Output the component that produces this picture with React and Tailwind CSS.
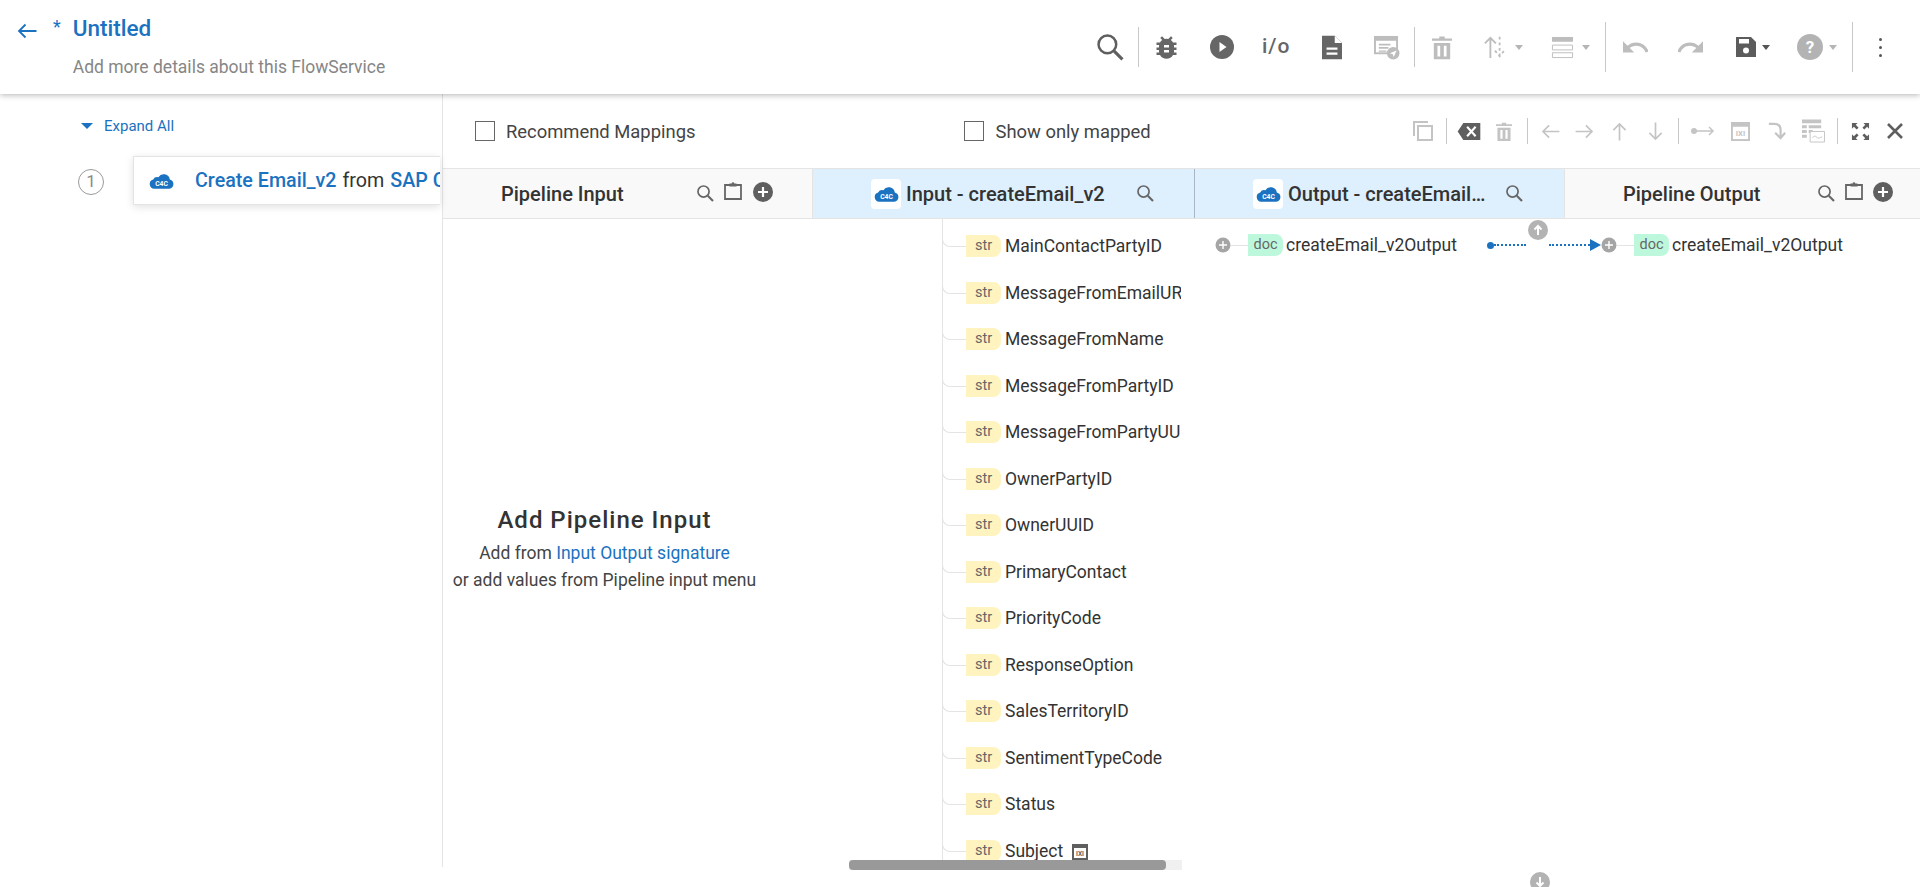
import React from 'react';

const rows = [
  'MainContactPartyID',
  'MessageFromEmailURI',
  'MessageFromName',
  'MessageFromPartyID',
  'MessageFromPartyUUID',
  'OwnerPartyID',
  'OwnerUUID',
  'PrimaryContact',
  'PriorityCode',
  'ResponseOption',
  'SalesTerritoryID',
  'SentimentTypeCode',
  'Status',
  'Subject',
];

const undoPath = 'M12.500 8c-2.650 0-5.050.990-6.900 2.600L2 7v9h9l-3.620-3.620c1.390-1.160 3.160-1.880 5.120-1.880 3.540 0 6.550 2.310 7.600 5.500l2.370-.780C21.080 11.030 17.150 8 12.500 8z';

const CloudIcon = ({ className }) => (
  <svg viewBox="0 0 24 16" className={className}>
    <path fill="#1b72c0" d="M5 16a4.600 4.600 0 0 1-1-9 4.500 4.500 0 0 1 5-2.200A6 6 0 0 1 20 7a4.600 4.600 0 0 1-.5 9z" />
    <text x="12" y="13" textAnchor="middle" fontSize="6.500" fontWeight="700" fill="#fff" fontFamily="Roboto, sans-serif">C4C</text>
  </svg>
);

const Divider = ({ className }) => <div className={`w-px shrink-0 bg-[#c8c8c8] ${className}`} />;

const Caret = ({ className, dark }) => (
  <span className={`w-0 h-0 shrink-0 border-x-[4.500px] border-x-transparent border-t-[5px] ${dark ? 'border-t-[#555]' : 'border-t-[#b5b5b5]'} ${className}`} />
);

const SearchIcon = ({ className, color = '#666666', width = 2.400 }) => (
  <svg viewBox="0 0 26 26" className={className}>
    <circle cx="10" cy="10" r="8.500" fill="none" stroke={color} strokeWidth={width} />
    <path d="m16.500 16.500 8 8" stroke={color} strokeWidth={width + 0.600} fill="none" />
  </svg>
);

const ArrowIcon = ({ className, color = '#c4c4c4' }) => (
  <svg viewBox="0 0 20 16" className={className}>
    <path d="M19.500 8H2M8.500 1.500 2 8l6.500 6.500" stroke={color} strokeWidth="1.800" fill="none" />
  </svg>
);

const Clipboard = () => (
  <svg viewBox="0 0 18 18" className="w-[18px] h-[18px]">
    <path d="M1 3h16v14H1z" fill="none" stroke="#666" strokeWidth="1.800" />
    <path d="M5.500 1.500h2.200a1.300 1.300 0 0 1 2.600 0h2.200v3h-7z" fill="#666" />
  </svg>
);

const PlusCircle = () => (
  <svg viewBox="0 0 20 20" className="w-5 h-5">
    <circle cx="10" cy="10" r="10" fill="#5f5f5f" />
    <path d="M10 5v10M5 10h10" stroke="#fff" strokeWidth="2.200" />
  </svg>
);

const SmallPlus = () => (
  <svg viewBox="0 0 16 16" className="w-4 h-4 shrink-0">
    <circle cx="8" cy="8" r="7.500" fill="#a5a5a5" />
    <path d="M8 4v8M4 8h8" stroke="#fff" strokeWidth="1.400" />
  </svg>
);

const ArrowBadge = ({ up }) => (
  <svg viewBox="0 0 20 20" className="w-5 h-5">
    <circle cx="10" cy="10" r="10" fill="#b3b3b3" />
    <path d={up ? 'M10 15V6M6.500 9.500 10 6l3.500 3.500' : 'M10 5v9M6.500 10.500 10 14l3.500-3.500'} stroke="#fff" strokeWidth="2" fill="none" />
  </svg>
);

const Chip = ({ kind }) => (
  <span
    className={`h-[22px] w-[35px] flex items-center justify-center text-[14.500px] rounded-r-lg shrink-0 text-[#666] ${
      kind === 'doc' ? 'bg-[#bdf8dd]' : 'bg-[#fff4bf]'
    }`}
  >
    {kind}
  </span>
);

const TopBar = () => (
  <header className="h-[94px] bg-white shadow-[0_1px_6px_rgba(0,0,0,0.3)] flex items-center justify-between relative z-20 shrink-0">
    <div className="flex items-start pl-[17px] pb-[1px]">
      <ArrowIcon className="w-5 h-4 mt-[9px]" color="#1b72c0" />
      <span className="ml-[16px] -mt-[1px] text-[#1b72c0] text-[18px]">*</span>
      <div className="ml-[12px]">
        <div className="text-[22.500px] leading-[28px] font-medium text-[#1b72c0]">Untitled</div>
        <div className="text-[17.500px] leading-[24px] mt-[13px] text-[#868686]">Add more details about this FlowService</div>
      </div>
    </div>
    <div className="flex items-center pr-[38px] h-[50px]">
      <SearchIcon className="w-[27px] h-[27px]" color="#5f5f5f" />
      <Divider className="ml-[14px] h-10" />
      <svg viewBox="3 2 18 20" className="ml-[16px] w-[23px] h-[25px]">
        <path fill="#666" d="M20 8h-2.800a6 6 0 0 0-1.800-1.950L17 4.400 15.600 3l-2.170 2.170a6 6 0 0 0-2.860 0L8.400 3 7 4.400l1.620 1.650A6 6 0 0 0 6.800 8H4v2h2.100c-.05.330-.1.660-.1 1v1H4v2h2v1c0 .340.050.670.100 1H4v2h2.800a6 6 0 0 0 10.400 0H20v-2h-2.100c.05-.330.100-.660.100-1v-1h2v-2h-2v-1c0-.340-.050-.670-.100-1H20zm-6 8h-4v-2h4zm0-4h-4v-2h4z" />
      </svg>
      <svg viewBox="0 0 24 24" className="ml-[32px] w-[24px] h-[24px]">
        <circle cx="12" cy="12" r="12" fill="#666" />
        <path d="M9.500 7v10l7-5z" fill="#fff" />
      </svg>
      <span className="ml-[28px] text-[21px] tracking-[1px] text-[#666] font-medium w-[32px]">i/o</span>
      <svg viewBox="0 0 22 26" className="ml-[28px] w-[20px] h-[25px]">
        <path d="M0 0h14l8 8v18H0z" fill="#666" />
        <path d="M14 0v8h8z" fill="#fff" />
        <path d="M5 13h12v2.400H5zM5 18.500h12v2.400H5z" fill="#fff" />
      </svg>
      <svg viewBox="0 0 28 26" className="ml-[31px] w-[27px] h-[25px]">
        <path d="M1 1h25v19H1z" fill="#bdbdbd" />
        <path d="M3 6h21v12H3z" fill="#fff" />
        <path d="M6 9h12v1.800H6zM6 12.500h10v1.800H6zM6 16h8v1.500H6z" fill="#bdbdbd" />
        <circle cx="21" cy="19" r="6.500" fill="#bdbdbd" />
        <path d="m17.500 19 7-3-3 7-1-3z" fill="#fff" />
      </svg>
      <Divider className="ml-[14px] h-10" />
      <svg viewBox="0 0 22 26" className="ml-[17px] w-[20px] h-[25px]">
        <path d="M0 3h8V1h6v2h8v2.500H0zM2 8h18v18H2z" fill="#bdbdbd" />
        <path d="M6 11h3v12H6zM13 11h3v12h-3z" fill="#fff" />
      </svg>
      <svg viewBox="0 0 26 28" className="ml-[31px] w-[24px] h-[26px]">
        <path d="M8 26V5M2 10l6-6 6 6" stroke="#bdbdbd" strokeWidth="2" fill="none" />
        <path d="M18 3v20M13 18l5 6 5-6" stroke="#bdbdbd" strokeWidth="2" strokeDasharray="3 3" fill="none" />
      </svg>
      <Caret className="ml-[8px]" />
      <svg viewBox="0 0 24 24" className="ml-[28px] w-[23px] h-[23px]">
        <path d="M1 1h22v5H1z" fill="#bdbdbd" />
        <path d="M1.500 9.500h21v5h-21zM1.500 17.500h21v5h-21z" fill="none" stroke="#bdbdbd" />
      </svg>
      <Caret className="ml-[8px]" />
      <Divider className="ml-[15px] h-[50px]" />
      <svg viewBox="2 7 20 10" className="ml-[17px] w-[25px] h-[13px]">
        <path d={undoPath} fill="#bdbdbd" />
      </svg>
      <svg viewBox="2 7 20 10" className="ml-[30px] w-[25px] h-[13px] -scale-x-100">
        <path d={undoPath} fill="#bdbdbd" />
      </svg>
      <svg viewBox="0 0 20 20" className="ml-[33px] w-[20px] h-[20px]">
        <path d="M0 0h15l5 5v15H0z" fill="#5c5c5c" />
        <path d="M3 2h10v4.500H3z" fill="#fff" />
        <circle cx="10" cy="13.500" r="3" fill="#fff" />
      </svg>
      <Caret dark className="ml-[6px]" />
      <svg viewBox="0 0 26 26" className="ml-[27px] w-[26px] h-[26px]">
        <circle cx="13" cy="13" r="13" fill="#b3b3b3" />
        <text x="13" y="19" textAnchor="middle" fontSize="17" fontWeight="700" fill="#fff" fontFamily="Roboto, sans-serif">?</text>
      </svg>
      <Caret className="ml-[6px]" />
      <Divider className="ml-[15px] h-[50px]" />
      <div className="ml-[26px] flex flex-col gap-[5px]">
        <span className="w-[3px] h-[3px] rounded-full bg-[#555]" />
        <span className="w-[3px] h-[3px] rounded-full bg-[#555]" />
        <span className="w-[3px] h-[3px] rounded-full bg-[#555]" />
      </div>
    </div>
  </header>
);

const LeftPanel = () => (
  <aside className="w-[443px] shrink-0 bg-white border-r border-[#e4e4e4] relative z-10 h-[773px]">
    <div className="flex items-center pl-[81px] pt-[16px] h-[48px]">
      <span className="w-0 h-0 border-x-[6px] border-x-transparent border-t-[6px] border-t-[#1b72c0]" />
      <span className="ml-[11px] text-[15px] text-[#1b72c0]">Expand All</span>
    </div>
    <div className="flex items-center mt-[14px] pl-[78px]">
      <span className="w-[26px] h-[26px] mt-[3px] rounded-full border border-[#9a9a9a] text-[#8a8a8a] flex items-center justify-center text-[17px]">1</span>
      <div className="ml-[29px] w-[307px] h-[49px] bg-white border border-[#e4e4e4] border-r-0 shadow-[0_2px_8px_rgba(0,0,0,0.12)] flex items-center pl-[15px] overflow-hidden whitespace-nowrap">
        <CloudIcon className="w-[25px] h-[17px] shrink-0" />
        <span className="ml-[21px] text-[19.700px] font-medium text-[#1b72c0]">Create Email_v2</span>
        <span className="ml-[6px] text-[19.700px] text-[#333]">from</span>
        <span className="ml-[6px] text-[19.700px] font-medium text-[#1b72c0]">SAP Cloud</span>
      </div>
    </div>
  </aside>
);

const MapToolbar = () => (
  <div className="h-[74px] flex items-center justify-between bg-white shrink-0">
    <div className="flex items-center">
      <span className="ml-[32px] w-5 h-5 border border-[#666]" />
      <span className="ml-[11px] mt-[1px] text-[18.400px] text-[#444]">Recommend Mappings</span>
      <span className="ml-[269px] w-5 h-5 border border-[#666]" />
      <span className="ml-[11px] mt-[1px] text-[18.400px] text-[#444]">Show only mapped</span>
    </div>
    <div className="flex items-center pr-[17px]">
      <svg viewBox="0 0 20 20" className="w-[20px] h-[20px]">
        <path d="M1 15V1h14" stroke="#c4c4c4" strokeWidth="2" fill="none" />
        <path d="M5 5h14v14H5z" stroke="#c4c4c4" strokeWidth="2" fill="none" />
      </svg>
      <Divider className="ml-[13px] h-[26px]" />
      <svg viewBox="0 0 24 18" className="ml-[10px] w-[24px] h-[17px]">
        <path d="M6 0h18v18H6L0 9z" fill="#5f5f5f" />
        <path d="m10 4 9 10M19 4l-9 10" stroke="#fff" strokeWidth="2.200" />
      </svg>
      <svg viewBox="0 0 22 26" className="ml-[15px] w-[16px] h-[21px]">
        <path d="M0 3h8V1h6v2h8v2.500H0zM2 8h18v18H2z" fill="#c4c4c4" />
        <path d="M6 11h3v12H6zM13 11h3v12h-3z" fill="#fff" />
      </svg>
      <Divider className="ml-[15px] h-[26px]" />
      <ArrowIcon className="ml-[13px] w-[19px] h-[15px]" />
      <ArrowIcon className="ml-[15px] w-[19px] h-[15px] rotate-180" />
      <ArrowIcon className="ml-[16px] w-[19px] h-[15px] rotate-90" />
      <ArrowIcon className="ml-[17px] w-[19px] h-[15px] -rotate-90" />
      <Divider className="ml-[13px] h-[26px]" />
      <svg viewBox="0 0 24 12" className="ml-[12px] w-[24px] h-[12px]">
        <circle cx="3" cy="6" r="3" fill="#c4c4c4" />
        <path d="M3 6h19M18 2l4 4-4 4" stroke="#c4c4c4" strokeWidth="1.500" fill="none" />
      </svg>
      <svg viewBox="0 0 20 20" className="ml-[16px] w-[19px] h-[19px]">
        <path d="M0 0h20v20H0z" fill="#c4c4c4" />
        <path d="M2 5h16v13H2z" fill="#fff" />
        <text x="10" y="15" textAnchor="middle" fontSize="8" fontWeight="700" fill="#c4c4c4" fontFamily="Roboto, sans-serif">IXI</text>
      </svg>
      <svg viewBox="0 0 20 22" className="ml-[18px] w-[18px] h-[20px]">
        <path d="M1 3h6c5 0 7 3 7 7v8M8 13l6 6 5-6" stroke="#c4c4c4" strokeWidth="2.400" fill="none" />
      </svg>
      <svg viewBox="0 0 24 24" className="ml-[16px] w-[23px] h-[24px]">
        <path d="M0 0h20v4H0zM0 6h5v3H0zM7 6h13v3H7zM0 11h5v3H0zM7 11h4v3H7zM0 16h5v3H0z" fill="#c4c4c4" />
        <path d="M8.500 12.500h15v11h-15z" fill="#fff" stroke="#c4c4c4" />
        <path d="M11 19c2-3 4-1 5 0s3 0 5-1" stroke="#c4c4c4" fill="none" />
      </svg>
      <Divider className="ml-[12px] h-[26px]" />
      <svg viewBox="0 0 20 20" className="ml-[13px] w-[19px] h-[19px]">
        <path d="M1 1h6L5 3l3 3-2 2-3-3-2 2zM19 1v6l-2-2-3 3-2-2 3-3-2-2zM19 19h-6l2-2-3-3 2-2 3 3 2-2zM1 19v-6l2 2 3-3 2 2-3 3 2 2z" fill="#5f5f5f" />
      </svg>
      <svg viewBox="0 0 16 16" className="ml-[17px] w-[16px] h-[16px]">
        <path d="m1 1 14 14M15 1 1 15" stroke="#5f5f5f" strokeWidth="2.600" />
      </svg>
    </div>
  </div>
);

const ColumnHeaders = () => (
  <div className="h-[51px] flex border-y border-[#e4e4e4] shrink-0 text-[20px] font-medium text-[#333]">
    <div className="w-[369px] bg-[#f9f9f9] flex items-center relative">
      <span className="ml-[58px]">Pipeline Input</span>
      <SearchIcon className="absolute left-[254px] top-[16px] w-[17px] h-[17px]" width={2.600} />
      <span className="absolute left-[281px] top-[13px]"><Clipboard /></span>
      <span className="absolute left-[310px] top-[13px]"><PlusCircle /></span>
    </div>
    <div className="w-[382px] bg-[#deeffe] flex items-center border-l border-[#e4e4e4] relative">
      <span className="ml-[58px] w-[30px] h-[30px] bg-white rounded-sm flex items-center justify-center">
        <CloudIcon className="w-[25px] h-[17px]" />
      </span>
      <span className="ml-[5px]">Input - createEmail_v2</span>
      <SearchIcon className="absolute left-[324px] top-[16px] w-[17px] h-[17px]" width={2.600} />
    </div>
    <div className="w-[370px] bg-[#deeffe] flex items-center border-l border-[#a9b6c2] relative">
      <span className="ml-[58px] w-[30px] h-[30px] bg-white rounded-sm flex items-center justify-center">
        <CloudIcon className="w-[25px] h-[17px]" />
      </span>
      <span className="ml-[5px] w-[198px] truncate">Output - createEmail_v2Output</span>
      <SearchIcon className="absolute left-[311px] top-[16px] w-[17px] h-[17px]" width={2.600} />
    </div>
    <div className="flex-1 bg-[#f9f9f9] flex items-center border-l border-[#e4e4e4] relative">
      <span className="ml-[58px]">Pipeline Output</span>
      <SearchIcon className="absolute left-[253px] top-[16px] w-[17px] h-[17px]" width={2.600} />
      <span className="absolute left-[280px] top-[13px]"><Clipboard /></span>
      <span className="absolute left-[308px] top-[13px]"><PlusCircle /></span>
    </div>
  </div>
);

const InputTree = () => (
  <div className="w-[382px] shrink-0 flex h-[641px]">
    <div className="w-[130px] shrink-0" />
    <div className="w-[239px] shrink-0 border-l border-[#e4e4e4] overflow-hidden flex flex-col pt-[16px]">
      {rows.map((name) => (
        <div key={name} className="h-[46.500px] shrink-0 flex items-start whitespace-nowrap text-[17.500px] text-[#333]">
          <span className="w-[24px] h-[12px] -ml-px shrink-0 border-l border-b border-[#e4e4e4] rounded-bl-lg" />
          <Chip kind="str" />
          <span className="ml-[4px] leading-[22px]">{name}</span>
          {name === 'Subject' && (
            <svg viewBox="0 0 16 16" className="ml-[9px] mt-[4px] w-4 h-4 shrink-0">
              <path d="M0 0h16v16H0z" fill="#5f5f5f" />
              <path d="M2 4h12v10H2z" fill="#fff" />
              <text x="8" y="12" textAnchor="middle" fontSize="6.500" fontWeight="700" fill="#5f5f5f" fontFamily="Roboto, sans-serif">IXI</text>
            </svg>
          )}
        </div>
      ))}
    </div>
  </div>
);

const MappingRow = () => (
  <div className="flex-1 relative text-[17.500px] text-[#333] whitespace-nowrap">
    <div className="flex items-center pt-[15px] pl-[21px]">
      <SmallPlus />
      <span className="w-[17px] h-px bg-[#e4e4e4]" />
      <Chip kind="doc" />
      <span className="ml-[3px] leading-[22px]">createEmail_v2Output</span>
    </div>
    <div className="absolute left-[334px] top-[1px]"><ArrowBadge up /></div>
    <div className="absolute left-[293px] top-[15px] h-[22px] flex items-center">
      <span className="w-[7px] h-[7px] rounded-full bg-[#1b72c0] shrink-0" />
      <span className="w-[32px] border-t-2 border-dotted border-[#1b72c0]" />
      <span className="w-[23px]" />
      <span className="w-[41px] border-t-2 border-dotted border-[#1b72c0]" />
      <span className="w-0 h-0 border-y-[6px] border-y-transparent border-l-[11px] border-l-[#1b72c0]" />
      <SmallPlus />
      <span className="w-[17px] h-px bg-[#e4e4e4]" />
      <Chip kind="doc" />
      <span className="ml-[3px] leading-[22px]">createEmail_v2Output</span>
    </div>
  </div>
);

const MapPanel = () => (
  <main className="flex-1 min-w-0 flex flex-col h-[793px] relative">
    <MapToolbar />
    <ColumnHeaders />
    <div className="flex-1 flex min-h-0 overflow-hidden">
      <div className="w-[369px] shrink-0 flex flex-col items-center pt-[286px] pr-[46px] bg-white whitespace-nowrap">
        <h2 className="text-[24px] leading-[30px] font-medium tracking-[1px] text-[#333]">Add Pipeline Input</h2>
        <p className="mt-[5px] text-[17.500px] leading-[26px] text-[#444]">
          Add from <span className="text-[#1b72c0]">Input Output signature</span>
        </p>
        <p className="mt-[1px] text-[17.500px] leading-[26px] text-[#444]">or add values from Pipeline input menu</p>
      </div>
      <InputTree />
      <MappingRow />
    </div>
    <div className="absolute left-[406px] top-[766px] w-[333px] h-[10px] bg-[#f0f0f0]">
      <div className="w-[317px] h-full bg-[#999] rounded-sm" />
    </div>
    <div className="absolute left-[1087px] top-[778px]"><ArrowBadge /></div>
  </main>
);

export default function App() {
  return (
    <div className="h-[887px] overflow-hidden bg-white flex flex-col font-['Roboto',sans-serif]">
      <TopBar />
      <div className="flex-1 flex min-h-0">
        <LeftPanel />
        <MapPanel />
      </div>
    </div>
  );
}
